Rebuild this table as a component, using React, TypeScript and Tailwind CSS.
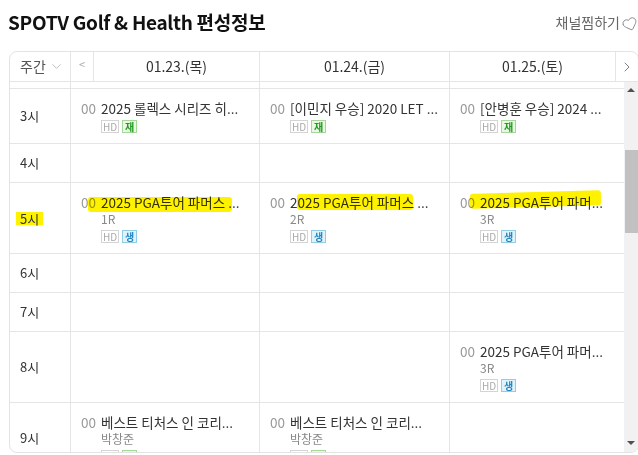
import { ChevronDown, ChevronRight, Heart } from 'lucide-react';

type Tag = '재' | '생';
type Prog = { title: string; sub?: string; tag: Tag };
type Row = { hour: string; cells: (Prog | null)[]; mark?: boolean };

const pga = (sub: string, title = '2025 PGA투어 파머스 ...'): Prog => ({ title, sub, tag: '생' });
const best: Prog = { title: '베스트 티처스 인 코리...', sub: '박창준', tag: '재' };

const rows: Row[] = [
  { hour: '2시', cells: [null, null, null] },
  {
    hour: '3시',
    cells: [
      { title: '2025 롤렉스 시리즈 히...', tag: '재' },
      { title: '[이민지 우승] 2020 LET ...', tag: '재' },
      { title: '[안병훈 우승] 2024 ...', tag: '재' },
    ],
  },
  { hour: '4시', cells: [null, null, null] },
  { hour: '5시', mark: true, cells: [pga('1R'), pga('2R'), pga('3R', '2025 PGA투어 파머...')] },
  { hour: '6시', cells: [null, null, null] },
  { hour: '7시', cells: [null, null, null] },
  { hour: '8시', cells: [null, null, pga('3R', '2025 PGA투어 파머...')] },
  { hour: '9시', cells: [best, best, null] },
];

const colClass = ['w-[189px] border-r border-[#e5e5e5]', 'w-[190px] border-r border-[#e5e5e5]', 'w-[174px]'];

// marker strokes someone drew over the 5시 row
const markClass = [
  'left-[17px] top-[14px] w-[144px] h-[15px] rounded-[3px]',
  'left-[37px] top-[11px] w-[116px] h-[16px] rounded-[3px]',
  'left-[20px] top-[9px] w-[131px] h-[15px] rounded-[3px] -rotate-[1.5deg]',
];

const days = [
  { label: '01.23.(목)', w: 'w-[166px] border-r' },
  { label: '01.24.(금)', w: 'w-[190px] border-r' },
  { label: '01.25.(토)', w: 'w-[166px] border-r' },
];

function Badge({ tag }: { tag: Tag }) {
  const color =
    tag === '재'
      ? 'bg-[#e9f7e3] border-[#a3d89a] text-[#1f9a1f]'
      : 'bg-[#e0f3fb] border-[#92cde6] text-[#2388c2]';
  return (
    <div className="flex gap-[3px]">
      <span className="flex h-[13px] w-[18px] items-center justify-center border border-[#d4d4d4] text-[10px] leading-none text-[#aaa]">
        HD
      </span>
      <span className={`flex h-[13px] w-[15px] items-center justify-center border text-[10px] font-bold leading-none ${color}`}>
        {tag}
      </span>
    </div>
  );
}

function Program({ p }: { p: Prog }) {
  return (
    <div className="flex px-[10px] py-[10px]">
      <span className="w-[20px] shrink-0 text-[13.5px] leading-[18px] text-[#999]">00</span>
      <div className="min-w-0">
        <div className="whitespace-nowrap text-[13.5px] leading-[18px] text-[#333]">{p.title}</div>
        {p.sub && <div className="text-[12px] leading-[16px] text-[#888]">{p.sub}</div>}
        <div className="mt-[3px]">
          <Badge tag={p.tag} />
        </div>
      </div>
    </div>
  );
}

export default function App() {
  return (
    <div className="h-[455px] w-[638px] overflow-hidden bg-white font-['Noto_Sans_CJK_KR','Noto_Sans',sans-serif]">
      <div className="flex h-[51px] items-start justify-between pl-[8px] pt-[9px]">
        <h1 className="text-[19px] font-bold leading-[26px] tracking-[-0.3px] text-[#111]">SPOTV Golf &amp; Health 편성정보</h1>
        <div className="flex items-center gap-[2px] pt-[2px] text-[14px] leading-[20px] text-[#666]">
          <span className="whitespace-nowrap">채널찜하기</span>
          <Heart size={16} strokeWidth={1.3} className="mt-[5px] -rotate-[20deg] text-[#888]" />
        </div>
      </div>

      <div className="ml-[9px] w-[630px] overflow-hidden rounded-[8px] border border-[#e3e3e3]">
        {/* header */}
        <div className="flex h-[30px] border-b border-[#e5e5e5] text-[14px] text-[#333]">
          <div className="flex w-[61px] items-center gap-[3px] border-r border-[#e5e5e5] pl-[10px] text-[#555]">
            <span className="whitespace-nowrap">주간</span>
            <ChevronDown size={15} strokeWidth={1.2} className="shrink-0 text-[#aaa]" />
          </div>
          <div className="flex w-[23px] items-center justify-center border-r border-[#e5e5e5] pb-[4px] text-[11px] text-[#aaa]">
            &lt;
          </div>
          {days.map(d => (
            <div key={d.label} className={`flex items-center justify-center border-[#e5e5e5] ${d.w}`}>
              {d.label}
            </div>
          ))}
          <div className="flex flex-1 items-center justify-center text-[#777]">
            <ChevronRight size={16} strokeWidth={1.4} />
          </div>
        </div>

        {/* body */}
        <div className="flex h-[370px]">
          <div className="w-[614px] overflow-hidden">
            <div className="-mt-[32px]">
              {rows.map(r => {
                const tall = r.cells.some(c => c?.sub);
                const has = r.cells.some(c => c);
                return (
                  <div
                    key={r.hour}
                    className={`flex border-b border-[#e5e5e5] ${tall ? 'h-[71px]' : has ? 'h-[55px]' : 'h-[39px]'}`}
                  >
                    <div className="flex w-[61px] items-center border-r border-[#e5e5e5] pl-[6px] text-[13px] text-[#333]">
                      <span className={r.mark ? 'bg-[#fff200] px-[4px] leading-[13px]' : 'px-[4px]'}>{r.hour}</span>
                    </div>
                    {r.cells.map((c, i) => (
                      <div key={i} className={`relative ${colClass[i]}`}>
                        {c && <Program p={c} />}
                        {r.mark && c && (
                          <div className={`pointer-events-none absolute bg-[#fff200] mix-blend-multiply ${markClass[i]}`} />
                        )}
                      </div>
                    ))}
                  </div>
                );
              })}
            </div>
          </div>

          {/* scrollbar */}
          <div className="flex w-[14px] flex-col bg-[#f1f1f1]">
            <div className="flex h-[15px] items-center justify-center">
              <div className="h-0 w-0 border-x-[4px] border-b-[4px] border-x-transparent border-b-[#505050]" />
            </div>
            <div className="flex-1 pl-[1px]">
              <div className="mt-[53px] h-[83px] bg-[#c1c1c1]" />
            </div>
            <div className="flex h-[18px] items-center justify-center">
              <div className="h-0 w-0 border-x-[4px] border-t-[4px] border-x-transparent border-t-[#505050]" />
            </div>
          </div>
        </div>
      </div>
    </div>
  );
}
